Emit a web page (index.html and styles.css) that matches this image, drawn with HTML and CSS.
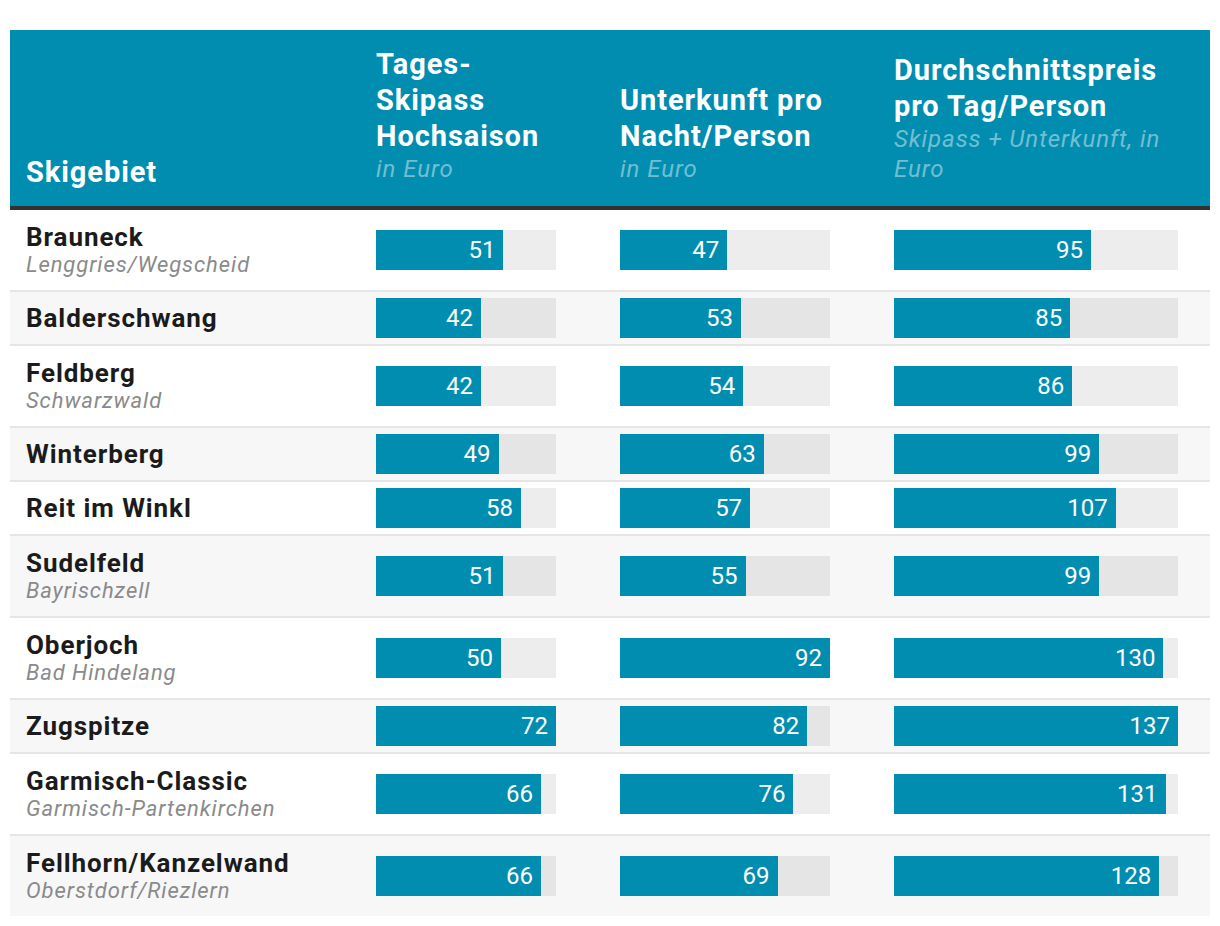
FILE: index.html
```html
<!DOCTYPE html>
<html lang="de">
<head>
<meta charset="utf-8">
<title>Skigebiete</title>
<link rel="stylesheet" href="styles.css">
</head>
<body>
<div class="table">
  <div class="head">
    <div class="hcell"><div class="htitle">Skigebiet</div></div>
    <div class="hcell"><div class="htitle">Tages-Skipass Hochsaison</div><div class="hsub">in Euro</div></div>
    <div class="hcell"><div class="htitle">Unterkunft pro Nacht/Person</div><div class="hsub">in Euro</div></div>
    <div class="hcell last"><div class="htitle">Durchschnittspreis pro Tag/Person</div><div class="hsub">Skipass + Unterkunft, in Euro</div></div>
  </div>

  <div class="row tall">
    <div class="name"><div class="n">Brauneck</div><div class="s">Lenggries/Wegscheid</div></div>
    <div class="cell"><div class="track"><div class="fill" style="width:70.83%">51</div></div></div>
    <div class="cell"><div class="track"><div class="fill" style="width:51.09%">47</div></div></div>
    <div class="cell last"><div class="track"><div class="fill" style="width:69.34%">95</div></div></div>
  </div>
  <div class="row">
    <div class="name"><div class="n">Balderschwang</div></div>
    <div class="cell"><div class="track"><div class="fill" style="width:58.33%">42</div></div></div>
    <div class="cell"><div class="track"><div class="fill" style="width:57.61%">53</div></div></div>
    <div class="cell last"><div class="track"><div class="fill" style="width:62.04%">85</div></div></div>
  </div>
  <div class="row tall">
    <div class="name"><div class="n">Feldberg</div><div class="s">Schwarzwald</div></div>
    <div class="cell"><div class="track"><div class="fill" style="width:58.33%">42</div></div></div>
    <div class="cell"><div class="track"><div class="fill" style="width:58.70%">54</div></div></div>
    <div class="cell last"><div class="track"><div class="fill" style="width:62.77%">86</div></div></div>
  </div>
  <div class="row">
    <div class="name"><div class="n">Winterberg</div></div>
    <div class="cell"><div class="track"><div class="fill" style="width:68.06%">49</div></div></div>
    <div class="cell"><div class="track"><div class="fill" style="width:68.48%">63</div></div></div>
    <div class="cell last"><div class="track"><div class="fill" style="width:72.26%">99</div></div></div>
  </div>
  <div class="row">
    <div class="name"><div class="n">Reit im Winkl</div></div>
    <div class="cell"><div class="track"><div class="fill" style="width:80.56%">58</div></div></div>
    <div class="cell"><div class="track"><div class="fill" style="width:61.96%">57</div></div></div>
    <div class="cell last"><div class="track"><div class="fill" style="width:78.10%">107</div></div></div>
  </div>
  <div class="row tall">
    <div class="name"><div class="n">Sudelfeld</div><div class="s">Bayrischzell</div></div>
    <div class="cell"><div class="track"><div class="fill" style="width:70.83%">51</div></div></div>
    <div class="cell"><div class="track"><div class="fill" style="width:59.78%">55</div></div></div>
    <div class="cell last"><div class="track"><div class="fill" style="width:72.26%">99</div></div></div>
  </div>
  <div class="row tall">
    <div class="name"><div class="n">Oberjoch</div><div class="s">Bad Hindelang</div></div>
    <div class="cell"><div class="track"><div class="fill" style="width:69.44%">50</div></div></div>
    <div class="cell"><div class="track"><div class="fill" style="width:100%">92</div></div></div>
    <div class="cell last"><div class="track"><div class="fill" style="width:94.89%">130</div></div></div>
  </div>
  <div class="row">
    <div class="name"><div class="n">Zugspitze</div></div>
    <div class="cell"><div class="track"><div class="fill" style="width:100%">72</div></div></div>
    <div class="cell"><div class="track"><div class="fill" style="width:89.13%">82</div></div></div>
    <div class="cell last"><div class="track"><div class="fill" style="width:100%">137</div></div></div>
  </div>
  <div class="row tall">
    <div class="name"><div class="n">Garmisch-Classic</div><div class="s">Garmisch-Partenkirchen</div></div>
    <div class="cell"><div class="track"><div class="fill" style="width:91.67%">66</div></div></div>
    <div class="cell"><div class="track"><div class="fill" style="width:82.61%">76</div></div></div>
    <div class="cell last"><div class="track"><div class="fill" style="width:95.62%">131</div></div></div>
  </div>
  <div class="row tall">
    <div class="name"><div class="n">Fellhorn/Kanzelwand</div><div class="s">Oberstdorf/Riezlern</div></div>
    <div class="cell"><div class="track"><div class="fill" style="width:91.67%">66</div></div></div>
    <div class="cell"><div class="track"><div class="fill" style="width:75.00%">69</div></div></div>
    <div class="cell last"><div class="track"><div class="fill" style="width:93.43%">128</div></div></div>
  </div>
</div>
</body>
</html>
```
FILE: styles.css
```css
html, body {
  margin: 0;
  padding: 0;
  background: #ffffff;
}

body {
  font-family: Roboto, "Liberation Sans", sans-serif;
  color: #1b1b1b;
  letter-spacing: 0.058em;
}

.table {
  margin: 30px 10px 0 10px;
  width: 1200px;
}

.head,
.row {
  display: grid;
  grid-template-columns: 350px 244px 274px 332px;
}

.head {
  background: #018db0;
  border-bottom: 4px solid #333333;
  height: 180px;
  box-sizing: border-box;
}

.hcell {
  padding: 16px 48px 16px 16px;
  display: flex;
  flex-direction: column;
  justify-content: flex-end;
}

.hcell.last {
  padding-right: 32px;
}

.htitle {
  font-size: 29px;
  font-weight: 700;
  line-height: 36px;
  color: #ffffff;
}

.hsub {
  font-size: 24px;
  font-style: italic;
  line-height: 30px;
  color: rgba(255, 255, 255, 0.45);
  padding-bottom: 6px;
}

.row {
  padding: 6px 0;
  align-items: center;
  border-bottom: 2px solid #e6e6e6;
}

.row.tall {
  padding: 12px 0;
}

.row:nth-child(odd) {
  background: #f7f7f7;
}

.row:last-child {
  border-bottom: none;
}

.name {
  padding-left: 16px;
}

.n {
  font-size: 26px;
  font-weight: 700;
  line-height: 30px;
  color: #1b1b1b;
}

.s {
  font-size: 22px;
  font-style: italic;
  line-height: 26px;
  color: #8a8a8a;
}

.cell {
  padding: 0 48px 0 16px;
}

.cell.last {
  padding-right: 32px;
}

.track {
  height: 40px;
  background: rgba(0, 0, 0, 0.07);
}

.fill {
  height: 40px;
  background: #018db0;
  color: #ffffff;
  font-size: 24px;
  line-height: 40px;
  letter-spacing: 0;
  text-align: right;
  padding-right: 8px;
  box-sizing: border-box;
}
```
